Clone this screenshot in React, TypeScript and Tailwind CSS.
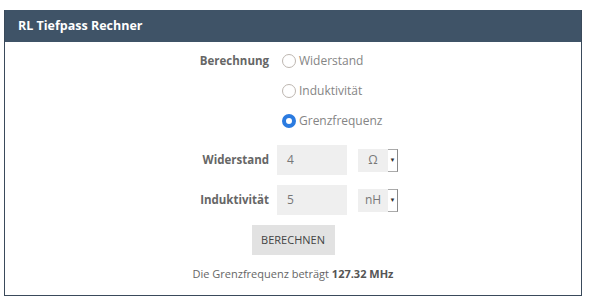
import React, { useState } from 'react';

type Mode = 'widerstand' | 'induktivitaet' | 'grenzfrequenz';

const modes: { id: Mode; label: string }[] = [
  { id: 'widerstand', label: 'Widerstand' },
  { id: 'induktivitaet', label: 'Induktivität' },
  { id: 'grenzfrequenz', label: 'Grenzfrequenz' },
];

const Radio: React.FC<{ checked: boolean; label: string; onSelect: () => void }> = ({ checked, label, onSelect }) => (
  <label className="flex items-center cursor-pointer" onClick={onSelect}>
    {checked ? (
      <span className="w-[14px] h-[14px] rounded-full border-[4px] border-[#2b7be0] bg-white" />
    ) : (
      <span className="w-[14px] h-[14px] rounded-full border border-[#bdb6b0] bg-white" />
    )}
    <span className="ml-[3px] text-[12px] text-[#858585]">{label}</span>
  </label>
);

const UnitSelect: React.FC<{ unit: string }> = ({ unit }) => (
  <div className="flex items-stretch h-[23px] ml-[11px]">
    <div className="w-[30px] bg-[#efefef] flex items-center justify-center text-[12px] text-[#777]">{unit}</div>
    <div className="w-[10px] bg-white border border-l-0 border-[#aaa] border-r-[#888] flex items-center justify-center">
      <span className="text-[6px] leading-none text-[#333]">▼</span>
    </div>
  </div>
);

export default function App() {
  const [mode, setMode] = useState<Mode>('grenzfrequenz');

  return (
    <div className="w-[598px] h-[306px] bg-white pt-[10px] pl-[4px]" style={{ fontFamily: '"Open Sans", "Liberation Sans", sans-serif' }}>
      <div className="w-[578px] h-[286px] border border-[#3a4a5b] border-t-0 flex flex-col">
        <div className="h-[32px] bg-[#3f5367] flex items-center pl-[13px]">
          <h2 className="text-[12.5px] font-bold text-white">RL Tiefpass Rechner</h2>
        </div>

        <div className="flex flex-col pt-[4px]">
          {modes.map((m, i) => (
            <div key={m.id} className="flex items-center h-[30px]">
              <div className="w-[264px] text-right text-[11.5px] font-bold text-[#666]">{i === 0 ? 'Berechnung' : ''}</div>
              <div className="ml-[13px]">
                <Radio checked={mode === m.id} label={m.label} onSelect={() => setMode(m.id)} />
              </div>
            </div>
          ))}

          <div className="flex items-center h-[30px] mt-[9px]">
            <div className="w-[264px] text-right text-[11.5px] font-bold text-[#666]">Widerstand</div>
            <div className="ml-[8px] w-[70px] h-[30px] bg-[#efefef] flex items-center px-[10px] text-[12px] text-[#777]">4</div>
            <UnitSelect unit="Ω" />
          </div>

          <div className="flex items-center h-[30px] mt-[10px]">
            <div className="w-[264px] text-right text-[11.5px] font-bold text-[#666]">Induktivität</div>
            <div className="ml-[8px] w-[70px] h-[30px] bg-[#efefef] flex items-center px-[10px] text-[12px] text-[#777]">5</div>
            <UnitSelect unit="nH" />
          </div>

          <div className="flex justify-center mt-[10px]">
            <button className="w-[83px] h-[30px] bg-[#e2e2e2] text-[11px] text-[#444] uppercase">Berechnen</button>
          </div>

          <p className="text-center text-[11px] text-[#666] mt-[11px]">
            Die Grenzfrequenz beträgt <span className="font-bold text-[#555]">127.32 MHz</span>
          </p>
        </div>
      </div>
    </div>
  );
}
